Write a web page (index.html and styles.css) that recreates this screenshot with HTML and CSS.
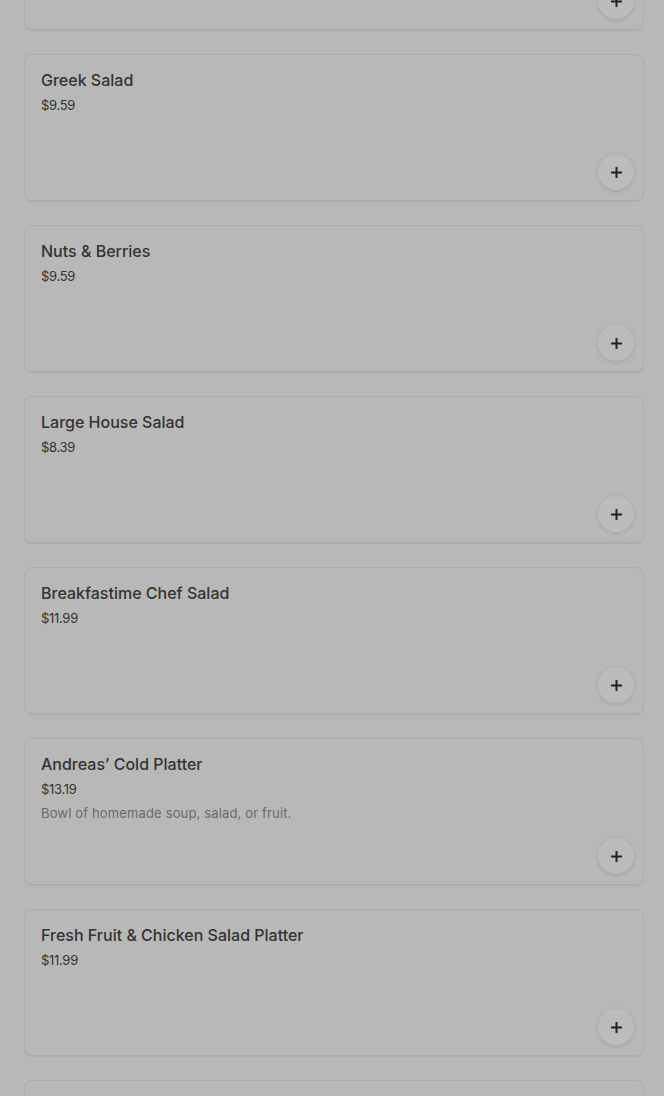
FILE: index.html
```html
<!DOCTYPE html>
<html lang="en">
<head>
    <meta charset="UTF-8">
    <meta name="viewport" content="width=device-width, initial-scale=1.0">
    <title>Menu</title>
    <link rel="stylesheet" href="styles.css">
</head>
<body>
    <div class="menu">
        <div class="item">
            <div class="info">
                <h3 class="name">House Salad</h3>
                <p class="price">$7.19</p>
            </div>
            <button class="add"><svg width="11" height="11" viewBox="0 0 11 11"><path d="M5.5 0v11M0 5.5h11" stroke="currentColor" stroke-width="2"/></svg></button>
        </div>
        <div class="item">
            <div class="info">
                <h3 class="name">Greek Salad</h3>
                <p class="price">$9.59</p>
            </div>
            <button class="add"><svg width="11" height="11" viewBox="0 0 11 11"><path d="M5.5 0v11M0 5.5h11" stroke="currentColor" stroke-width="2"/></svg></button>
        </div>
        <div class="item">
            <div class="info">
                <h3 class="name">Nuts &amp; Berries</h3>
                <p class="price">$9.59</p>
            </div>
            <button class="add"><svg width="11" height="11" viewBox="0 0 11 11"><path d="M5.5 0v11M0 5.5h11" stroke="currentColor" stroke-width="2"/></svg></button>
        </div>
        <div class="item">
            <div class="info">
                <h3 class="name">Large House Salad</h3>
                <p class="price">$8.39</p>
            </div>
            <button class="add"><svg width="11" height="11" viewBox="0 0 11 11"><path d="M5.5 0v11M0 5.5h11" stroke="currentColor" stroke-width="2"/></svg></button>
        </div>
        <div class="item">
            <div class="info">
                <h3 class="name">Breakfastime Chef Salad</h3>
                <p class="price">$11.99</p>
            </div>
            <button class="add"><svg width="11" height="11" viewBox="0 0 11 11"><path d="M5.5 0v11M0 5.5h11" stroke="currentColor" stroke-width="2"/></svg></button>
        </div>
        <div class="item">
            <div class="info">
                <h3 class="name">Andreas’ Cold Platter</h3>
                <p class="price">$13.19</p>
                <p class="desc">Bowl of homemade soup, salad, or fruit.</p>
            </div>
            <button class="add"><svg width="11" height="11" viewBox="0 0 11 11"><path d="M5.5 0v11M0 5.5h11" stroke="currentColor" stroke-width="2"/></svg></button>
        </div>
        <div class="item">
            <div class="info">
                <h3 class="name">Fresh Fruit &amp; Chicken Salad Platter</h3>
                <p class="price">$11.99</p>
            </div>
            <button class="add"><svg width="11" height="11" viewBox="0 0 11 11"><path d="M5.5 0v11M0 5.5h11" stroke="currentColor" stroke-width="2"/></svg></button>
        </div>
        <div class="item">
            <div class="info">
                <h3 class="name">Tuna Salad Platter</h3>
                <p class="price">$11.99</p>
            </div>
            <button class="add"><svg width="11" height="11" viewBox="0 0 11 11"><path d="M5.5 0v11M0 5.5h11" stroke="currentColor" stroke-width="2"/></svg></button>
        </div>
    </div>
</body>
</html>
```
FILE: styles.css
```css
*{
    padding: 0;
    margin: 0;
    box-sizing: border-box;
}
body{
    background-color: #b8b8b8;
    font-family: Inter, "Liberation Sans", sans-serif;
    color: #2f2f2f;
    overflow: hidden;
}
/* list is scrolled: first card only shows its bottom edge */
.menu{
    display: flex;
    flex-direction: column;
    gap: 24px;
    padding: 0 20px 0 24px;
    margin-top: -117px;
}
.item{
    height: 147px;
    border: 1px solid #acacac;
    border-radius: 8px;
    box-shadow: 0 1px 1px rgba(0,0,0,0.06);
    display: flex;
    justify-content: space-between;
    align-items: flex-end;
    padding: 15px 9px 10px 16px;
}
.info{
    align-self: flex-start;
}
.name{
    font-size: 16px;
    font-weight: 500;
    line-height: 20px;
    color: #333;
}
.price{
    font-size: 13px;
    line-height: 18px;
    margin-top: 6px;
    color: #333;
    letter-spacing: -0.3px;
}
.desc{
    font-size: 13px;
    line-height: 18px;
    margin-top: 6px;
    color: #6a6a6a;
    letter-spacing: 0.15px;
}
.add{
    width: 36px;
    height: 36px;
    border-radius: 50%;
    border: none;
    background-color: #bcbcbc;
    box-shadow: 0 1px 4px rgba(0,0,0,0.12);
    color: #222;
    display: flex;
    align-items: center;
    justify-content: center;
    flex-shrink: 0;
}
```
